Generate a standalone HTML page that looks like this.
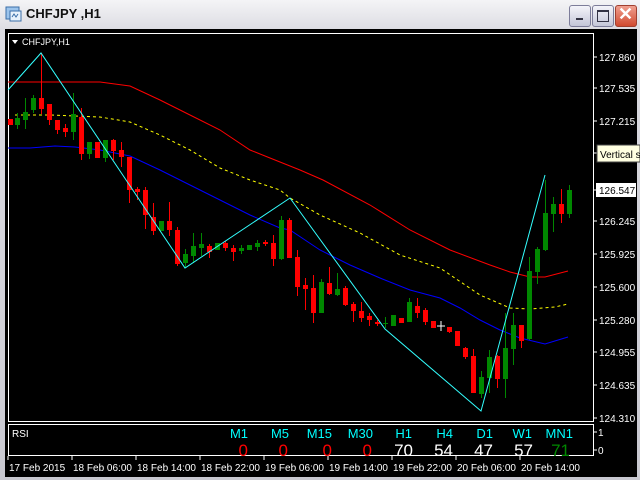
<!DOCTYPE html>
<html><head><meta charset="utf-8"><style>
html,body{margin:0;padding:0;width:640px;height:480px;overflow:hidden;background:#d6d3ce}
#win{position:absolute;left:0;top:0;width:640px;height:480px;background:linear-gradient(#f4f4f6,#dcdce2 30px,#c8c8d0 480px)}
#title{position:absolute;left:26px;top:6px;font:bold 13px "Liberation Sans",sans-serif;color:#111}
.btn{position:absolute;top:5px;width:20px;height:20px;border:1px solid #7d7d9a;border-radius:3px;background:linear-gradient(#f4f4fa,#c4c6d8)}
svg{position:absolute;left:0;top:0}
text{font-family:"Liberation Sans",sans-serif}
</style></head><body><div id="win">
<svg width="640" height="30">
<rect x="6" y="7" width="13" height="12" fill="#9cc4ec" stroke="#3a6ea8"/>
<rect x="10" y="11" width="11" height="10" fill="#e8f2fc" stroke="#3a6ea8"/>
<path d="M12 17 l2-3 2 3 2-3" stroke="#3a6ea8" fill="none"/>
</svg>
<div id="title">CHFJPY ,H1</div>
<div class="btn" style="left:569px"><div style="position:absolute;left:6px;top:12px;width:7px;height:2px;background:#334"></div></div>
<div class="btn" style="left:592px"><div style="position:absolute;left:4px;top:4px;width:10px;height:9px;border:1px solid #334;border-top-width:2px"></div></div>
<div class="btn" style="left:615px;width:20px;background:linear-gradient(#f0a090,#d04a30);border-color:#a04030"><div style="position:absolute;left:2px;top:-2px;color:#fff;font:bold 18px 'Liberation Sans',sans-serif">✕</div></div>
<div style="position:absolute;left:5px;top:29px;width:632px;height:448px;background:#000"></div>
<svg width="640" height="480">
<rect x="8.5" y="33.5" width="585" height="388" fill="none" stroke="#fff"/>
<rect x="8.5" y="424.5" width="585" height="31" fill="none" stroke="#fff"/>
<path d="M12 40h6l-3 4z" fill="#fff"/>
<text x="22" y="45" font-size="9" fill="#fff">CHFJPY,H1</text>
<g stroke-width="1" fill="none">
<polyline stroke="#f00" points="8,82 50,82 100,82 130,86 160,100 190,115 220,130 250,150 270,158 300,170 323,180 370,205 410,230 450,250 490,265 510,272 530,277 545,277 568,271"/>
<polyline stroke="#ff0" stroke-dasharray="3,3" points="15,115 50,115 100,117 130,122 160,135 190,150 220,168 250,180 280,190 290,198 320,215 360,233 400,255 440,268 480,295 510,308 530,309 555,307 568,304"/>
<polyline stroke="#00f" points="8,148 30,148 55,146 75,147 100,150 130,156 160,170 190,185 220,200 250,215 280,228 290,230 320,250 350,265 380,278 410,290 440,298 460,308 480,320 500,330 520,338 545,344 568,337"/>
</g>
<g id="c"></g>
<polyline stroke="#3ff" fill="none" points="8,90 41,53 185,268 290,198 385,329 481,411 545,175"/>
<path d="M441 321v10M437 326h8" stroke="#fff"/>
<g stroke="#fff"><path d="M594 57h3M594 88h3M594 121h3M594 153h3M594 190h3M594 221h3M594 254h3M594 287h3M594 320h3M594 352h3M594 385h3M594 418h3M594 432h3M594 450h3"/>
<path d="M8 456v4M72 456v4M136 456v4M200 456v4M264 456v4M328 456v4M392 456v4M456 456v4M520 456v4"/></g>
<g font-size="10" fill="#fff">
<text x="599" y="61">127.860</text><text x="599" y="92">127.535</text><text x="599" y="125">127.215</text>
<text x="599" y="225">126.245</text><text x="599" y="258">125.925</text><text x="599" y="291">125.600</text>
<text x="599" y="324">125.280</text><text x="599" y="356">124.955</text><text x="599" y="389">124.635</text><text x="599" y="422">124.310</text>
<text x="598" y="436">1</text><text x="598" y="454">0</text>
<text x="12" y="437">RSI</text>
<text x="9" y="471">17 Feb 2015</text><text x="73" y="471">18 Feb 06:00</text><text x="137" y="471">18 Feb 14:00</text><text x="201" y="471">18 Feb 22:00</text><text x="265" y="471">19 Feb 06:00</text><text x="329" y="471">19 Feb 14:00</text><text x="393" y="471">19 Feb 22:00</text><text x="457" y="471">20 Feb 06:00</text><text x="521" y="471">20 Feb 14:00</text>
</g>
<rect x="597" y="145" width="43" height="17" fill="#ffffe1" stroke="#444"/>
<text x="600" y="158" font-size="10" fill="#000">Vertical s</text>
<rect x="596" y="183" width="40" height="14" fill="#fff"/>
<text x="599" y="194" font-size="10" fill="#000">126.547</text>
<g font-size="13" fill="#0ff" text-anchor="end">
<text x="248" y="438">M1</text><text x="289" y="438">M5</text><text x="332" y="438">M15</text><text x="373" y="438">M30</text><text x="412" y="438">H1</text><text x="453" y="438">H4</text><text x="493" y="438">D1</text><text x="532" y="438">W1</text><text x="573" y="438">MN1</text></g>
<g font-size="17" text-anchor="end">
<text x="248" y="456" fill="#f00">0</text><text x="288" y="456" fill="#f00">0</text><text x="332" y="456" fill="#f00">0</text><text x="372" y="456" fill="#f00">0</text>
<text x="413" y="456" fill="#fff">70</text><text x="453" y="456" fill="#fff">54</text><text x="493" y="456" fill="#fff">47</text><text x="533" y="456" fill="#fff">57</text><text x="570" y="456" fill="#080">71</text></g>
</svg>
<script>
var d=[[10,'r',119,125,119,125],[17,'g',118,125,113,129],[25,'g',112,120,98,129],[33,'g',98,110,95,113],[41,'r',98,109,53,114],[49,'r',104,120,104,125],[57,'r',120,130,120,134],[65,'r',128,132,124,137],[73,'g',114,132,93,140],[81,'r',117,154,108,160],[89,'g',142,154,142,159],[97,'r',142,158,142,158],[105,'g',140,158,140,162],[113,'r',140,151,139,160],[121,'r',150,157,142,167],[129,'r',157,190,157,203],[137,'r',189,192,187,200],[145,'r',190,215,187,229],[153,'r',217,231,203,235],[161,'g',221,231,221,231],[169,'r',221,230,202,236],[177,'r',230,264,227,266],[185,'g',254,263,249,267],[193,'g',246,256,233,263],[201,'g',244,248,233,256],[209,'r',246,252,244,258],[217,'g',243,250,243,250],[225,'r',243,248,241,251],[233,'r',248,252,245,261],[241,'g',248,251,245,254],[249,'g',245,250,245,250],[257,'g',243,247,240,251],[265,'r',242,244,240,246],[273,'r',243,259,235,266],[281,'g',220,259,216,260],[289,'r',220,258,218,258],[297,'r',257,287,250,296],[305,'r',285,289,278,310],[313,'r',288,313,275,323],[321,'g',282,313,279,313],[329,'r',283,294,267,295],[337,'g',289,295,273,296],[345,'r',288,305,286,306],[353,'r',304,311,302,322],[361,'r',311,318,302,322],[369,'r',316,320,313,326],[377,'r',322,324,320,326],[385,'g',323,324,317,328],[393,'g',315,326,315,326],[401,'r',318,323,318,323],[409,'g',302,322,298,322],[417,'r',306,313,298,318],[425,'r',310,322,308,325],[433,'r',321,328,321,328],[449,'r',327,332,327,333],[457,'r',331,346,331,346],[465,'r',348,357,347,359],[473,'r',356,393,349,393],[481,'g',377,394,371,398],[489,'g',357,378,350,393],[497,'r',356,379,355,388],[505,'g',348,379,313,398],[513,'g',325,349,313,365],[521,'r',325,341,325,348],[529,'g',271,339,257,340],[537,'g',249,272,247,284],[545,'g',213,250,180,251],[553,'g',204,214,197,232],[561,'r',204,214,189,223],[569,'g',190,214,185,218]];
var s='';d.forEach(function(c){var col=c[1]=='r'?'#f00':'#080';s+='<line x1="'+(c[0]+.5)+'" x2="'+(c[0]+.5)+'" y1="'+c[4]+'" y2="'+c[5]+'" stroke="'+col+'"/><rect x="'+(c[0]-2)+'" y="'+c[2]+'" width="5" height="'+Math.max(1,c[3]-c[2])+'" fill="'+col+'"/>';});
document.getElementById('c').innerHTML=s;
</script>
</div></body></html>
